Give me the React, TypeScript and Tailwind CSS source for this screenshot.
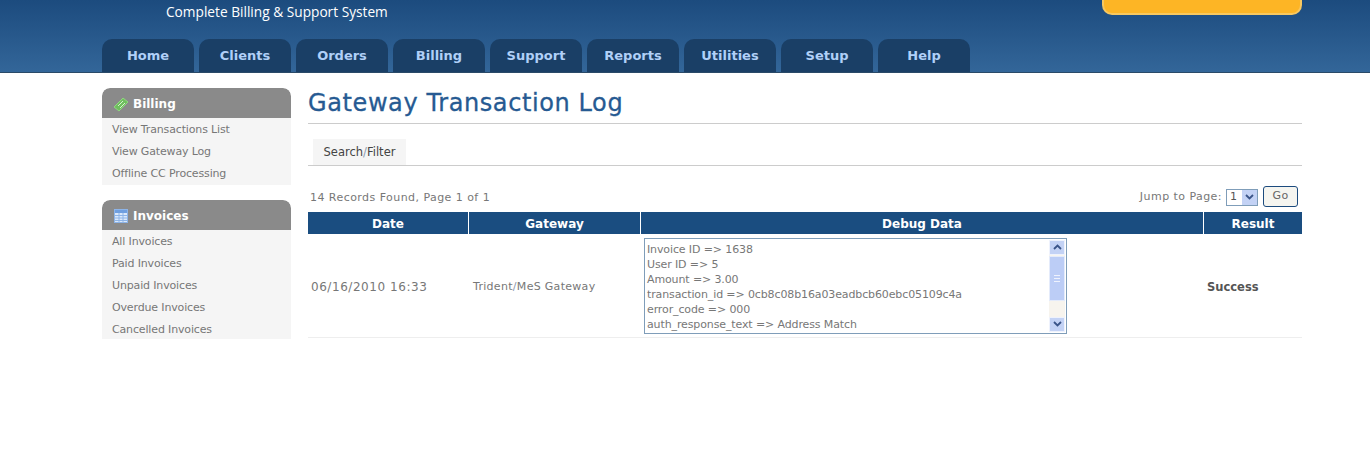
import React from "react";

const navItems = ["Home", "Clients", "Orders", "Billing", "Support", "Reports", "Utilities", "Setup", "Help"];

const debugLines = [
  "Invoice ID => 1638",
  "User ID => 5",
  "Amount => 3.00",
  "transaction_id => 0cb8c08b16a03eadbcb60ebc05109c4a",
  "error_code => 000",
  "auth_response_text => Address Match",
];

const BillsIcon = () => (
  <svg width="16" height="16" viewBox="0 0 16 16" className="shrink-0">
    <path d="M1 11 L10 2 L15 6 L6 15 Z" fill="#6fbf5f" stroke="#8fd67f" strokeWidth="1" />
    <path d="M5 10 L10 5 M7 12 L12 7" stroke="#d8f2d0" strokeWidth="1" />
  </svg>
);

const TableIcon = () => (
  <svg width="14" height="14" viewBox="0 0 14 14" className="shrink-0">
    <rect x="0.5" y="0.5" width="13" height="13" fill="#dbe9fb" stroke="#8db4e8" />
    <rect x="1" y="1" width="12" height="3" fill="#6f9fe0" />
    <path d="M1 6.5 H13 M1 9 H13 M1 11.5 H13 M5 4 V13 M9 4 V13" stroke="#8db4e8" strokeWidth="1" />
  </svg>
);

const SideBox = ({
  title,
  icon,
  links,
  height,
}: {
  title: string;
  icon: React.ReactNode;
  links: string[];
  height: string;
}) => (
  <div className={`${height} overflow-hidden bg-[#f5f5f5] rounded-t-lg`}>
    <div className="h-[30px] bg-[#8a8a8a] rounded-t-lg flex items-center gap-[4px] pl-[11px] pt-[1px] text-white font-bold text-[12px]">
      <div className="w-[16px] flex justify-center">{icon}</div>
      <span>{title}</span>
    </div>
    <div className="pt-[1px]">
      {links.map((l) => (
        <div key={l} className="h-[22px] pl-[10px] flex items-center text-[11px] tracking-[-0.15px] text-[#777777]">
          {l}
        </div>
      ))}
    </div>
  </div>
);

const ScrollBar = () => (
  <div className="w-[16px] flex flex-col bg-[#f7f4ee] shrink-0">
    <div className="h-[15px] bg-[#c3d2f5] border border-[#eef2fd] flex items-center justify-center">
      <svg width="9" height="6" viewBox="0 0 9 6">
        <path d="M1 5 L4.5 1.5 L8 5" fill="none" stroke="#3a5488" strokeWidth="1.8" />
      </svg>
    </div>
    <div className="h-[45px] mt-[1px] bg-[#bccdf6] border border-[#e4ebfb] flex items-center justify-center">
      <svg width="6" height="7" viewBox="0 0 6 7">
        <path d="M0 0.5 H6 M0 3.5 H6 M0 6.5 H6" stroke="#eef2fd" strokeWidth="1" />
      </svg>
    </div>
    <div className="flex-1" />
    <div className="h-[15px] bg-[#c3d2f5] border border-[#eef2fd] flex items-center justify-center">
      <svg width="9" height="6" viewBox="0 0 9 6">
        <path d="M1 1 L4.5 4.5 L8 1" fill="none" stroke="#3a5488" strokeWidth="1.8" />
      </svg>
    </div>
  </div>
);

export default function App() {
  return (
    <div className="h-[450px] overflow-hidden bg-white font-['DejaVu_Sans',sans-serif]">
      <header className="h-[73px] bg-gradient-to-b from-[#1c4b7e] to-[#336699] border-b border-[#2a4a68]">
        <div className="w-[1200px] ml-[102px] h-[72px] flex flex-col">
          <div className="h-[39px] flex justify-between items-start">
            <div className="pl-[64px] pt-[3px] text-white text-[13.7px] leading-[17px] font-['Open_Sans',sans-serif]">
              Complete Billing &amp; Support System
            </div>
            <div className="w-[200px] h-[15px] bg-[#fdb525] border-x-2 border-b-2 border-[#f8c860] rounded-b-[10px]" />
          </div>
          <nav className="flex gap-[5px] h-[33px]">
            {navItems.map((n) => (
              <div
                key={n}
                className="w-[92px] h-[33px] bg-[#1a3f66] rounded-t-[10px] flex items-center justify-center text-[#b0d0f8] font-bold text-[13px]"
              >
                {n}
              </div>
            ))}
          </nav>
        </div>
      </header>

      <div className="w-[1200px] ml-[102px] flex gap-[17px] pt-[15px]">
        <aside className="w-[189px] flex flex-col gap-[15px]">
          <SideBox
            title="Billing"
            height="h-[97px]"
            icon={<BillsIcon />}
            links={["View Transactions List", "View Gateway Log", "Offline CC Processing"]}
          />
          <SideBox
            title="Invoices"
            height="h-[139px]"
            icon={<TableIcon />}
            links={["All Invoices", "Paid Invoices", "Unpaid Invoices", "Overdue Invoices", "Cancelled Invoices"]}
          />
        </aside>

        <main className="flex-1">
          <h1 className="h-[36px] text-[#265a92] text-[24px] leading-[30px] tracking-[0.6px] border-b border-[#cccccc] [-webkit-text-stroke:0.3px_#265a92]">
            Gateway Transaction Log
          </h1>
          <div className="mt-[15px] h-[27px] border-b border-[#cccccc] pl-[5px]">
            <div className="w-[93px] h-[26px] pt-[1px] bg-[#f5f5f5] flex items-center justify-center text-[11.5px] text-[#444444]">
              Search<span className="text-[#8a9ab0]">/</span>Filter
            </div>
          </div>
          <div className="mt-[18px] h-[28px] flex justify-between items-start pl-[2px] pr-[4px] text-[11px] text-[#777777] tracking-[0.45px]">
            <span className="pt-[6px]">14 Records Found, Page 1 of 1</span>
            <div className="flex items-center gap-[4px] pt-[3px]">
              <span className="pt-[1px]">Jump to Page:</span>
              <div className="w-[32px] h-[17px] border border-[#7f9db9] flex items-center justify-between pl-[3px] text-[#555555]">
                <span>1</span>
                <div className="w-[15px] h-[15px] bg-[#c3d2f5] flex items-center justify-center">
                  <svg width="9" height="6" viewBox="0 0 9 6">
                    <path d="M1 1 L4.5 4.5 L8 1" fill="none" stroke="#3a5488" strokeWidth="1.8" />
                  </svg>
                </div>
              </div>
              <div className="ml-[1px] -mt-[1px] w-[35px] h-[21px] border border-[#1c4b7e] rounded-[3px] bg-[#f5f5f0] flex items-center justify-center text-[#666666]">
                Go
              </div>
            </div>
          </div>

          <div className="w-[994px]">
            <div className="grid grid-cols-[161px_172px_563px_98px] h-[22px] bg-[#1a4d80] text-white font-bold text-[12px]">
              <div className="flex items-center justify-center pt-[1px] border-r border-white">Date</div>
              <div className="flex items-center justify-center pt-[1px] border-r border-white">Gateway</div>
              <div className="flex items-center justify-center pt-[1px] border-r border-white">Debug Data</div>
              <div className="flex items-center justify-center pt-[1px]">Result</div>
            </div>
            <div className="grid grid-cols-[161px_172px_563px_98px] h-[104px] items-center border-b border-[#eeeeee] text-[11px] text-[#777777]">
              <div className="pl-[3px] pt-[3px] tracking-[0.55px] text-[12px]">06/16/2010 16:33</div>
              <div className="pl-[4px] pt-[3px] tracking-[0.3px]">
                Trident<span className="text-[#8a9ab0]">/</span>MeS Gateway
              </div>
              <div className="pl-[3px]">
                <div className="w-[423px] h-[96px] border border-[#7f9db9] flex bg-white p-[1px]">
                  <div className="flex-1 pl-[1px] pt-[2px] text-[11px] leading-[15px] tracking-[-0.12px] text-[#777777]">
                    {debugLines.map((d) => (
                      <div key={d}>{d}</div>
                    ))}
                  </div>
                  <ScrollBar />
                </div>
              </div>
              <div className="pl-[3px] pt-[5px] font-bold text-[#555555] text-[11.5px]">Success</div>
            </div>
          </div>
        </main>
      </div>
    </div>
  );
}
